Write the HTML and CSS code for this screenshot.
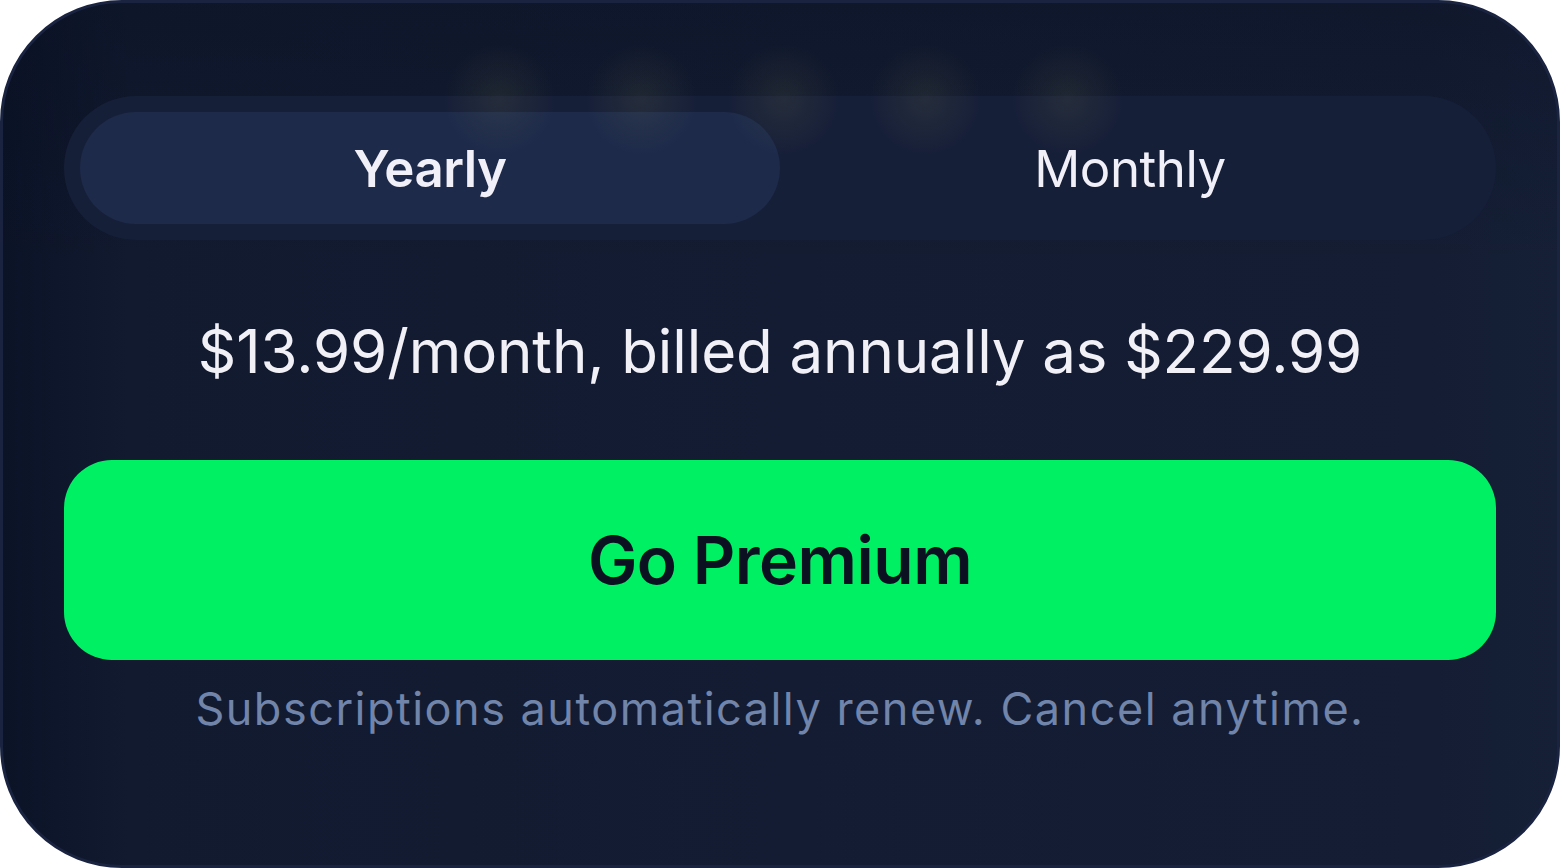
FILE: index.html
```html
<!DOCTYPE html>
<html lang="en">
<head>
<meta charset="utf-8">
<title>Go Premium</title>
<link rel="stylesheet" href="styles.css">
</head>
<body>
<div class="card">
  <div class="glows" aria-hidden="true">
    <span class="glow"></span><span class="glow"></span><span class="glow"></span><span class="glow"></span><span class="glow"></span>
  </div>
  <div class="segment">
    <div class="seg-option active">Yearly</div>
    <div class="seg-option">Monthly</div>
  </div>
  <p class="price">$13.99/month, billed annually as $229.99</p>
  <button class="cta">Go Premium</button>
  <p class="note">Subscriptions automatically renew. Cancel anytime.</p>
</div>
</body>
</html>
```
FILE: styles.css
```css
* { box-sizing: border-box; }
html, body { margin: 0; padding: 0; background: #ffffff; }
body { width: 1560px; height: 868px; overflow: hidden; font-family: Inter, "Noto Sans", sans-serif; }

.card {
  position: relative;
  width: 1560px;
  height: 868px;
  border: 3px solid #1a2440;
  border-radius: 122px;
  background:
    linear-gradient(180deg, rgba(8,14,32,0.35) 0%, rgba(8,14,32,0) 30%),
    linear-gradient(90deg, #0b1327 0%, #111a2f 8%, #131c32 50%, #141d33 92%, #151f36 100%);
  padding: 93px 61px 0;
  display: flex;
  flex-direction: column;
  align-items: stretch;
  overflow: hidden;
}

.glows {
  position: absolute;
  left: 440px;
  top: 40px;
  display: flex;
  gap: 29px;
  pointer-events: none;
  z-index: 2;
}
.glow {
  width: 113px;
  height: 113px;
  border-radius: 50%;
  background: radial-gradient(circle, rgba(170,170,90,0.10) 0%, rgba(170,170,90,0.05) 35%, rgba(170,170,90,0) 70%);
}

.segment {
  height: 144px;
  border-radius: 72px;
  background: #161f38;
  padding: 16px;
  display: grid;
  grid-template-columns: 700px 700px;
}
.seg-option {
  display: flex;
  align-items: center;
  justify-content: center;
  border-radius: 56px;
  color: #f1eff7;
  font-size: 51px;
  font-weight: 400;
  letter-spacing: -0.5px;
}
.seg-option.active {
  background: #1d2a4a;
  font-weight: 600;
}

.price {
  margin: 74px 0 0;
  height: 74px;
  line-height: 74px;
  text-align: center;
  color: #f1f0f7;
  font-size: 60px;
  font-weight: 400;
  letter-spacing: -0.1px;
  white-space: nowrap;
}

.cta {
  margin-top: 72px;
  height: 200px;
  border: 0;
  border-radius: 48px;
  background: #00f064;
  color: #0b1120;
  font-family: inherit;
  font-size: 66px;
  font-weight: 600;
  letter-spacing: -0.5px;
}

.note {
  margin: 22px 0 0;
  height: 54px;
  line-height: 54px;
  text-align: center;
  color: #7184aa;
  font-size: 45px;
  letter-spacing: 1.5px;
  white-space: nowrap;
}
```
